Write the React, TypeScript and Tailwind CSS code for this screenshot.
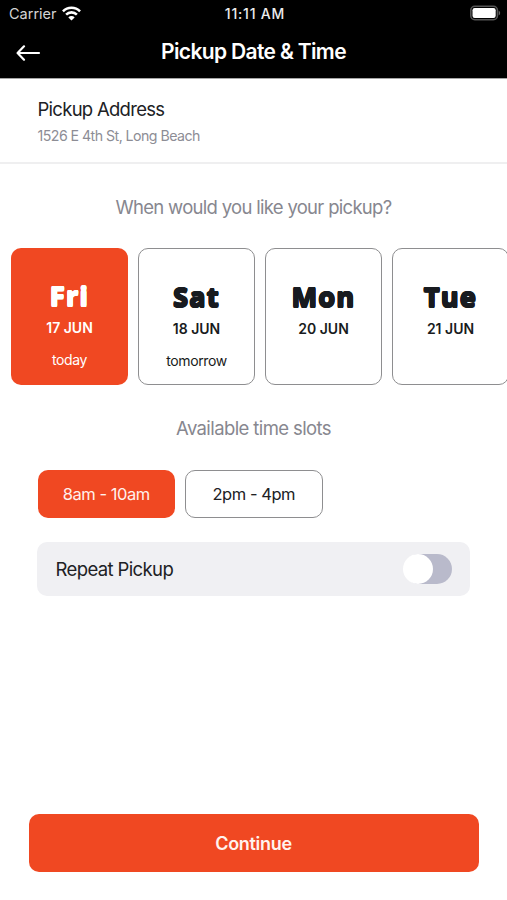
import { useState } from 'react'
import clsx from 'clsx'

const days = [
  { name: 'Fri', date: '17 JUN', note: 'today' },
  { name: 'Sat', date: '18 JUN', note: 'tomorrow' },
  { name: 'Mon', date: '20 JUN', note: '' },
  { name: 'Tue', date: '21 JUN', note: '' },
]

const slots = ['8am - 10am', '2pm - 4pm']

function StatusBar() {
  return (
    <div className="grid h-[28px] grid-cols-[1fr_auto_1fr] items-center pl-[9px] pr-[6px]">
      <div className="flex items-center gap-[5px] text-[14.5px] text-[#d4d4d4]">
        <span>Carrier</span>
        <svg className="-mt-[2px]" width="19" height="15" viewBox="0 0 18 14" fill="none" stroke="#fff" strokeWidth="2.4">
          <path d="M.9 4.9a11.3 11.3 0 0 1 16.2 0" />
          <path d="M3.9 8.1a7.1 7.1 0 0 1 10.2 0" />
          <path d="M9 13.7 6 10.7a4.2 4.2 0 0 1 6 0z" fill="#fff" stroke="none" />
        </svg>
      </div>
      <span className="-mt-[1px] text-center text-[14px] font-medium tracking-[0.8px] text-[#ececec]">11:11 AM</span>
      <svg className="-mt-[2px] justify-self-end" width="31" height="16" viewBox="0 0 31 16">
        <rect x="0.8" y="1.3" width="26.6" height="13.4" rx="4" fill="none" stroke="#555" strokeWidth="1.6" />
        <rect x="2.5" y="3" width="23.2" height="10" rx="2.2" fill="#fff" />
        <path d="M28.7 5.7c1.9.7 1.9 3.9 0 4.6z" fill="#666" />
      </svg>
    </div>
  )
}

export default function App() {
  const [day, setDay] = useState(0)
  const [slot, setSlot] = useState(0)
  const [repeat, setRepeat] = useState(false)

  return (
    <div className="flex h-[900px] w-[507px] flex-col overflow-hidden bg-white font-['Inter',sans-serif] text-[#202124]">
      <header className="h-[79px] shrink-0 border-b border-[#a5a5a5] bg-black text-white">
        <StatusBar />
        <div className="grid h-[46px] grid-cols-[60px_1fr_60px] items-center">
          <button className="pl-[16px] pt-[4px]" aria-label="Back">
            <svg width="25" height="16" viewBox="0 0 25 16" fill="none" stroke="#fff" strokeWidth="2.2" strokeLinecap="round" strokeLinejoin="round">
              <path d="M23 8H2M8 1.3 1.6 8 8 14.7" />
            </svg>
          </button>
          <h1 className="pt-[1px] text-center text-[21px] font-semibold tracking-[-0.65px]">Pickup Date &amp; Time</h1>
        </div>
      </header>

      <section className="h-[85px] shrink-0 border-b-2 border-[#efeff0] pl-[37.5px] pt-[17px]">
        <h2 className="text-[18.5px] leading-[26px] tracking-[-0.72px]">Pickup Address</h2>
        <p className="mt-[4px] text-[14.2px] leading-[20px] tracking-[-0.55px] text-[#8d8d95]">1526 E 4th St, Long Beach</p>
      </section>

      <p className="mt-[30px] text-center text-[18.5px] leading-[26px] tracking-[-0.7px] text-[#87878f]">When would you like your pickup?</p>

      <div className="ml-[11px] mt-[28px] flex shrink-0 gap-[10px]">
        {days.map((d, i) => (
          <button
            key={d.name}
            onClick={() => setDay(i)}
            className={clsx(
              'flex h-[137px] w-[117px] shrink-0 flex-col items-center rounded-[10px] pt-[30px]',
              day === i ? 'bg-[#f04822] text-white' : 'border-[1.5px] border-[#8e8e90] text-[#181b20]',
            )}
          >
            {/* the ring of shadows thickens and rounds the letters */}
            <span className="h-[36px] font-['Open_Sans',sans-serif] text-[27px] font-bold leading-[35px] tracking-[1.3px] [text-shadow:0.8px_0_0_currentColor,-0.8px_0_0_currentColor,0_0.8px_0_currentColor,0_-0.8px_0_currentColor,0.6px_0.6px_0_currentColor,-0.6px_0.6px_0_currentColor,0.6px_-0.6px_0_currentColor,-0.6px_-0.6px_0_currentColor]">{d.name}</span>
            <span className="mt-[4px] text-[14px] font-semibold leading-[20px]">{d.date}</span>
            <span className="mt-[12px] text-[14px] leading-[20px] tracking-[-0.4px]">{d.note}</span>
          </button>
        ))}
      </div>

      <p className="mt-[30px] text-center text-[18.5px] leading-[26px] tracking-[-0.6px] text-[#87878f]">Available time slots</p>

      <div className="mt-[29px] flex gap-[10px] pl-[37.5px]">
        {slots.map((s, i) => (
          <button
            key={s}
            onClick={() => setSlot(i)}
            className={clsx(
              'h-[48px] w-[137.5px] rounded-[10px] text-[16.5px] tracking-[-0.45px]',
              slot === i ? 'bg-[#f04822] text-[#fff1ec]' : 'border-[1.5px] border-[#8e8e90]',
            )}
          >
            {s}
          </button>
        ))}
      </div>

      <div className="mx-[37px] mt-[24px] flex h-[54px] items-center justify-between rounded-[10px] bg-[#f0f0f3] pl-[18.5px] pr-[18px]">
        <span className="pt-[2px] text-[18.5px] tracking-[-0.62px]">Repeat Pickup</span>
        <button
          role="switch"
          aria-checked={repeat}
          aria-label="Repeat Pickup"
          onClick={() => setRepeat(!repeat)}
          className={clsx('flex h-[30px] w-[48px] items-center rounded-full', repeat ? 'justify-end bg-[#f04822]' : 'bg-[#b9bacb]')}
        >
          <span className="-ml-[1px] size-[30px] rounded-full bg-white" />
        </button>
      </div>

      <button className="mx-[28.5px] mb-[28px] mt-auto h-[58px] shrink-0 rounded-[10px] bg-[#f04822] text-[18px] font-semibold tracking-[-0.3px] text-[#fff3ef]">
        Continue
      </button>
    </div>
  )
}
